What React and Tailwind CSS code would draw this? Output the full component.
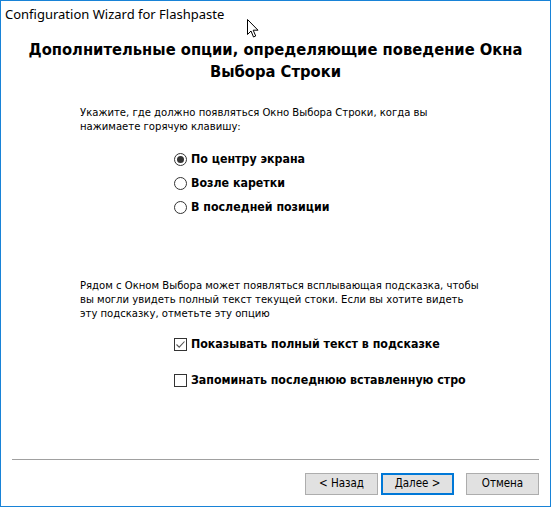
import React from "react";

const body = { fontFamily: '"DejaVu Sans Condensed", "DejaVu Sans", sans-serif' };

const Radio = ({ checked, label }) => (
  <div className="flex items-center h-[24px]">
    <span className="w-[13px] h-[13px] rounded-full border border-[#333] bg-white flex items-center justify-center shrink-0">
      {checked && <span className="w-[7px] h-[7px] rounded-full bg-[#333]" />}
    </span>
    <span className="ml-[4px] text-[12.3px] font-bold text-black whitespace-nowrap">{label}</span>
  </div>
);

const Check = ({ checked, label }) => (
  <div className="flex items-center h-[24px] w-[292px] overflow-hidden">
    <span className="w-[13px] h-[13px] border border-[#333] bg-white flex items-center justify-center shrink-0">
      {checked && (
        <svg width="11" height="11" viewBox="0 0 11 11">
          <path d="M1.5 5.5 L4.2 8.2 L9.5 2.5" fill="none" stroke="#555" strokeWidth="1.1" />
        </svg>
      )}
    </span>
    <span className="ml-[4px] text-[12.3px] font-bold text-black whitespace-nowrap">{label}</span>
  </div>
);

const Button = ({ children, primary }) => (
  <button
    className={
      primary
        ? "w-[73px] h-[22px] bg-[#e1e1e1] border-2 border-[#0078d7] text-[11.5px] text-black leading-none"
        : "w-[73px] h-[22px] bg-[#e1e1e1] border border-[#adadad] text-[11.5px] text-black leading-none"
    }
    style={body}
  >
    {children}
  </button>
);

export default function App() {
  return (
    <div className="relative w-[551px] h-[507px] bg-white border border-[#1883d7] flex flex-col overflow-hidden">
      {/* title bar */}
      <div
        className="h-[30px] pt-[5px] pl-[4px] text-[13px] leading-[16px] text-black"
        style={{ fontFamily: '"Noto Sans", "Open Sans", sans-serif' }}
      >
        Configuration Wizard for Flashpaste
      </div>

      {/* mouse cursor */}
      <svg className="absolute left-[246px] top-[18px]" width="13" height="20" viewBox="0 0 13 20">
        <path
          d="M0.5 0.5 L0.5 15.5 L4 12 L6.5 18 L8.7 17 L6.2 11.2 L11 11.2 Z"
          fill="white"
          stroke="black"
          strokeWidth="1"
          strokeLinejoin="miter"
        />
      </svg>

      <div className="flex-1 flex flex-col" style={body}>
        <h1 className="mt-[8px] text-center text-[16.4px] leading-[22px] font-bold text-black">
          Дополнительные опции, определяющие поведение Окна
          <br />
          Выбора Строки
        </h1>

        <p className="mt-[23px] ml-[79px] text-[11.2px] leading-[14px] text-black">
          Укажите, где должно появляться Окно Выбора Строки, когда вы
          <br />
          нажимаете горячую клавишу:
        </p>

        <div className="mt-[13px] ml-[173px] flex flex-col">
          <Radio checked label="По центру экрана" />
          <Radio label="Возле каретки" />
          <Radio label="В последней позиции" />
        </div>

        <p className="mt-[60px] ml-[79px] text-[11.2px] leading-[14px] text-black">
          Рядом с Окном Выбора может появляться всплывающая подсказка, чтобы
          <br />
          вы могли увидеть полный текст текущей стоки. Если вы хотите видеть
          <br />
          эту подсказку, отметьте эту опцию
        </p>

        <div className="mt-[11px] ml-[173px] flex flex-col gap-[12px]">
          <Check checked label="Показывать полный текст в подсказке" />
          <Check label="Запоминать последнюю вставленную строку" />
        </div>
      </div>

      {/* footer */}
      <div className="px-[11px] pb-[11px]">
        <div className="h-px bg-[#a0a0a0]" />
        <div className="mt-[13px] flex justify-end">
          <div className="flex gap-[3px] mr-[12px]">
            <Button>&lt; Назад</Button>
            <Button primary>Далее &gt;</Button>
          </div>
          <Button>Отмена</Button>
        </div>
      </div>
    </div>
  );
}
